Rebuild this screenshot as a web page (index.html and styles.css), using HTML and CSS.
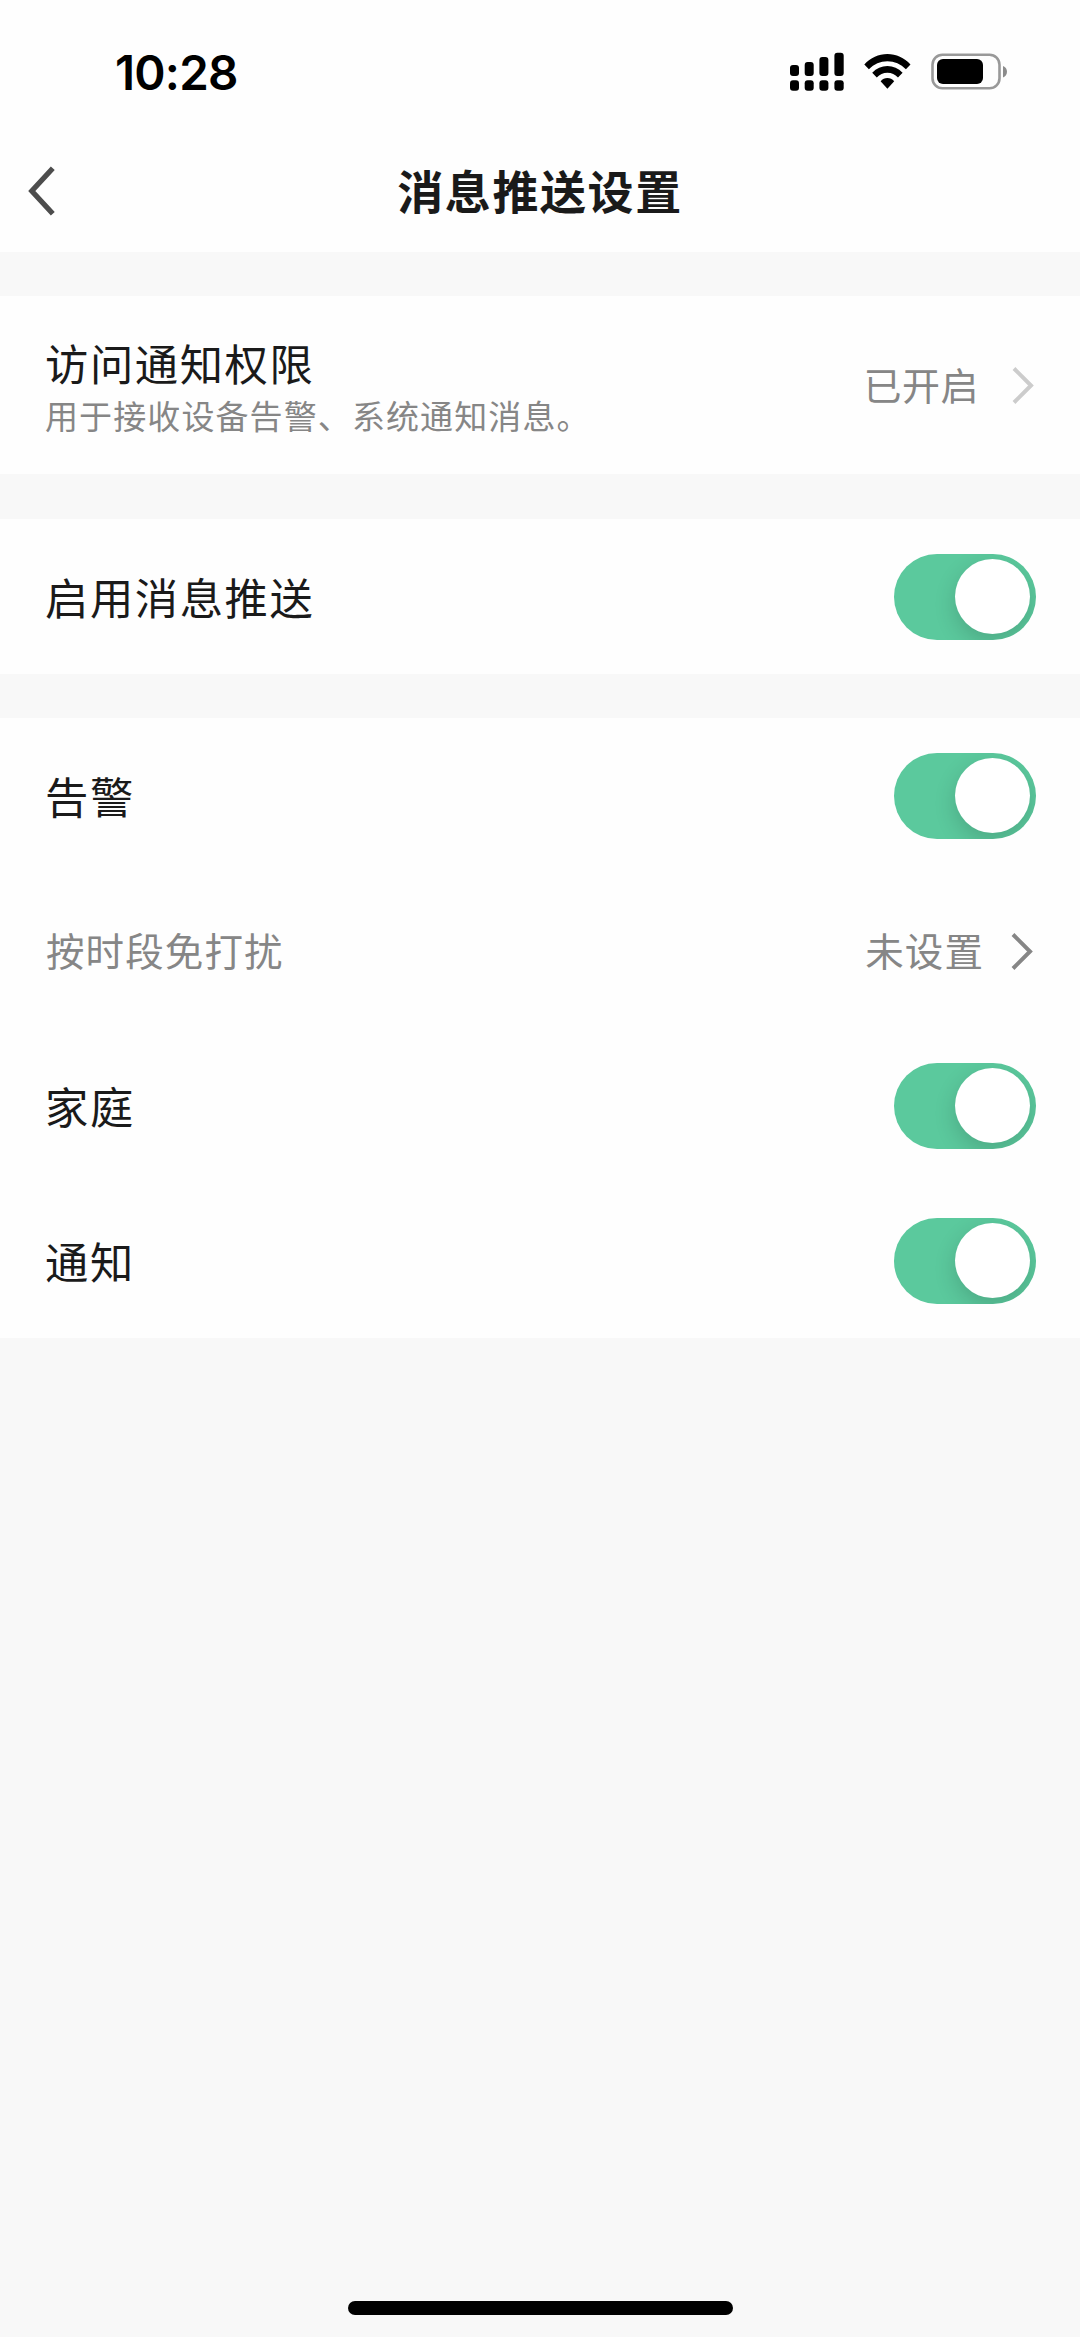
FILE: index.html
```html
<!DOCTYPE html>
<html lang="zh-CN">
<head>
<meta charset="utf-8">
<title>消息推送设置</title>
<link rel="stylesheet" href="styles.css">
</head>
<body>
<div class="screen">
  <header class="top">
    <div class="status">
      <span class="time">10:28</span>
      <svg class="status-icons" width="220" height="44" viewBox="0 0 220 44">
        <g>
          <rect x="0" y="15" width="9" height="11" rx="3"/>
          <rect x="14.7" y="12" width="9" height="14" rx="3"/>
          <rect x="29.4" y="7" width="9" height="19" rx="3"/>
          <rect x="44.4" y="2.7" width="9.3" height="23.3" rx="3"/>
          <rect x="0" y="30.3" width="9" height="10.4" rx="3"/>
          <rect x="14.7" y="30.3" width="9" height="10.4" rx="3"/>
          <rect x="29.4" y="30.3" width="9" height="10.4" rx="3"/>
          <rect x="44.4" y="30.3" width="9.3" height="10.4" rx="3"/>
        </g>
        <g>
          <path d="M74.300 14.500C80.500 7.600 88.600 4 97.400 4S114.300 7.600 120.500 14.500L115.900 19.300C110.800 14 104.500 11.200 97.400 11.200S84 14 78.900 19.300Z"/>
          <path d="M82.200 22.700C86.400 18.200 91.600 15.900 97.400 15.900S108.400 18.200 112.600 22.700L108 27.500C105.100 24.600 101.600 22.800 97.400 22.800S89.700 24.600 86.800 27.500Z"/>
          <path d="M90.600 31.200C92.500 29 94.800 27.900 97.400 27.900S102.300 29 104.200 31.200L97.400 38.800Z"/>
        </g>
        <rect x="142.500" y="4.700" width="67" height="33.600" rx="10" fill="none" stroke="#999" stroke-width="2.600"/>
        <rect x="147" y="9" width="46" height="25" rx="6"/>
        <path d="M213 16V27.400C215.600 26.400 217 24.200 217 21.700S215.600 17 213 16Z" fill="#8c8c8c"/>
      </svg>
    </div>
    <div class="nav">
      <svg class="back" width="30" height="54" viewBox="0 0 30 54">
        <path d="M25.800 4.200L4.800 27L25.800 49.800" fill="none" stroke="#4d4d4d" stroke-width="5.300"/>
      </svg>
      <h1 class="nav-title">消息推送设置</h1>
    </div>
  </header>

  <section class="group permission">
    <div class="permission-text">
      <div class="label">访问通知权限</div>
      <div class="hint">用于接收设备告警、系统通知消息。</div>
    </div>
    <div class="value value-on">已开启</div>
    <svg class="chevron chevron-light" width="24" height="40" viewBox="0 0 24 40">
      <path d="M3 3.500L20 20.500L3 37.500"/>
    </svg>
  </section>

  <section class="group">
    <div class="row"><span class="label">启用消息推送</span><span class="toggle"><span class="knob"></span></span></div>
  </section>

  <section class="group">
    <div class="row"><span class="label">告警</span><span class="toggle"><span class="knob"></span></span></div>
    <div class="row">
      <span class="sublabel">按时段免打扰</span>
      <span class="value">未设置</span>
      <svg class="chevron" width="24" height="40" viewBox="0 0 24 40">
        <path d="M3 3.500L20 20.500L3 37.500"/>
      </svg>
    </div>
    <div class="row"><span class="label">家庭</span><span class="toggle"><span class="knob"></span></span></div>
    <div class="row"><span class="label">通知</span><span class="toggle"><span class="knob"></span></span></div>
  </section>

  <div class="home-indicator"></div>
</div>
</body>
</html>
```
FILE: styles.css
```css
* { box-sizing: border-box; }
body {
  margin: 0;
  font-family: "Noto Sans CJK SC", sans-serif;
  color: #1a1a1a;
}
.screen {
  display: flex;
  flex-direction: column;
  gap: 44px;
  width: 1080px;
  height: 2337px;
  padding-bottom: 22px;
  background: #f8f8f8;
}
.top { height: 252px; background: #fefefe; }
.status {
  display: flex;
  justify-content: space-between;
  align-items: center;
  height: 130px;
  padding: 14px 70px 0 115px;
}
.time {
  padding-top: 1px;
  font: 600 47.500px/60px Inter, sans-serif;
  color: #000;
  letter-spacing: -0.800px;
}
.nav {
  display: grid;
  grid-template-columns: 60px 1fr 60px;
  align-items: center;
  height: 122px;
  padding: 0 27px;
}
.nav-title {
  margin: 0;
  padding-bottom: 5px;
  text-align: center;
  font-size: 46px;
  line-height: 60px;
  font-weight: 700;
  letter-spacing: 1.6px;
}
.group { background: #fefefe; }
.permission {
  display: flex;
  align-items: center;
  height: 178px;
  margin-bottom: 1px;
  padding: 0 45px;
}
.permission-text { flex: 1; padding-top: 19px; }
.permission-text .label { padding: 0; line-height: 60px; }
.label {
  padding-bottom: 2px;
  font-size: 43.300px;
  letter-spacing: 1.600px;
}
.hint {
  margin-top: -7px;
  padding-bottom: 12px;
  font-size: 33px;
  line-height: 60px;
  letter-spacing: 1.1px;
  color: #868686;
}
.row {
  display: flex;
  align-items: center;
  height: 155px;
  padding: 0 44px 0 45px;
}
.row .label, .sublabel { flex: 1; }
.sublabel, .value {
  padding-bottom: 4px;
  font-size: 38.500px;
  letter-spacing: 1.100px;
  color: #868686;
}
.sublabel { padding-left: 1px; }
.row .value { margin-right: 26px; }
.value-on { font-size: 38px; letter-spacing: 0.500px; margin-right: 32px; }
.chevron {
  fill: none;
  stroke: #868686;
  stroke-width: 4;
  margin-right: 2px;
}
.chevron-light { stroke: #ccc; margin-right: 0; }
.toggle {
  display: flex;
  align-items: center;
  justify-content: flex-end;
  width: 142px;
  height: 86px;
  padding: 0 6px;
  border-radius: 43px;
  background: #5bc99d;
  overflow: hidden;
}
.knob {
  width: 75px;
  height: 75px;
  border-radius: 50%;
  background: #fff;
  box-shadow: 0 8px 22px rgba(0, 0, 0, 0.16);
}
.home-indicator {
  width: 385px;
  height: 14px;
  margin: auto auto 0;
  border-radius: 7px;
  background: #000;
}
```
